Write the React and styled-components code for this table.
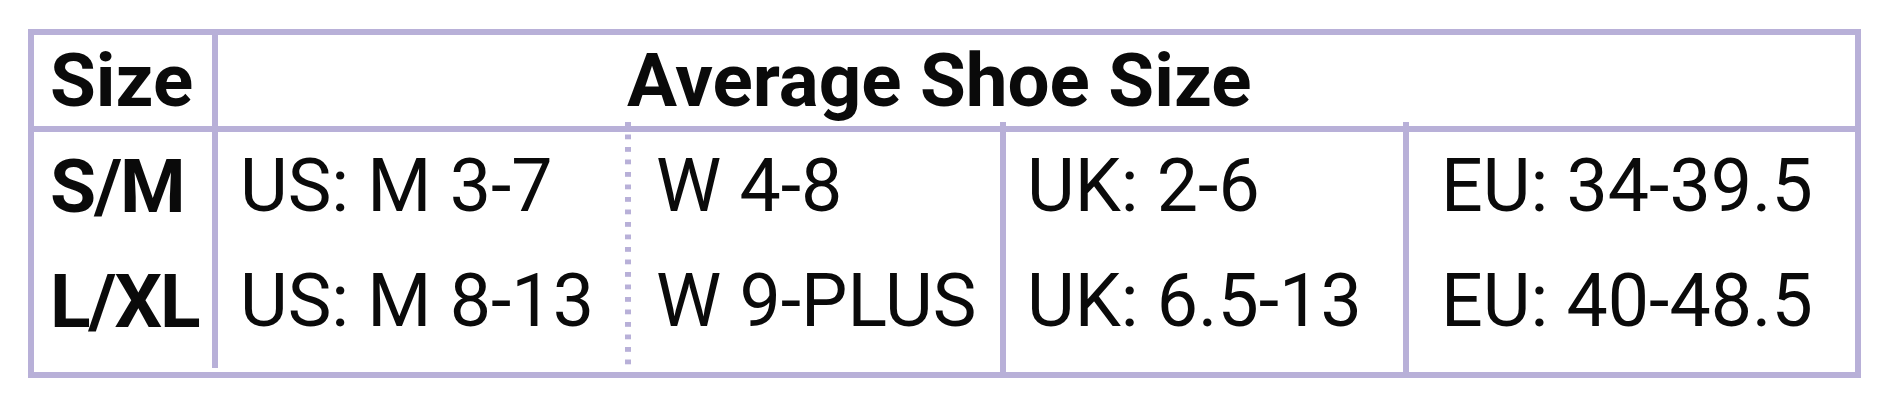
import React from 'react';
import styled, { createGlobalStyle } from 'styled-components';

const lilac = '#b8b0d8';

const GlobalStyle = createGlobalStyle`
    html, body {
        margin: 0;
        padding: 0;
        background: #ffffff;
    }
    body {
        font-family: Roboto, "Liberation Sans", Arial, sans-serif;
        color: #0a0a0a;
    }
`;

const rows = [
    { label: 'S/M', us: 'US: M 3-7', w: 'W 4-8', uk: 'UK: 2-6', eu: 'EU: 34-39.5' },
    { label: 'L/XL', us: 'US: M 8-13', w: 'W 9-PLUS', uk: 'UK: 6.5-13', eu: 'EU: 40-48.5' },
];

function App() {
    return (
        <>
            <GlobalStyle />
            <Page>
                <Table>
                    <HeaderRow>
                        <HeadLabel>Size</HeadLabel>
                        <HeadTitle>Average Shoe Size</HeadTitle>
                    </HeaderRow>
                    <Body>
                        <LabelCol>
                            {rows.map((r) => (
                                <Cell key={r.label} $bold>{r.label}</Cell>
                            ))}
                        </LabelCol>
                        <Column $width="407px" $pad="22px">
                            {rows.map((r) => <Cell key={r.us}>{r.us}</Cell>)}
                        </Column>
                        <Column $width="375px" $pad="25px" $line="dotted">
                            {rows.map((r) => <Cell key={r.w}>{r.w}</Cell>)}
                        </Column>
                        <Column $width="403px" $pad="21px" $line="solid">
                            {rows.map((r) => <Cell key={r.uk}>{r.uk}</Cell>)}
                        </Column>
                        <Column $pad="32px" $line="solid" $grow>
                            {rows.map((r) => <Cell key={r.eu}>{r.eu}</Cell>)}
                        </Column>
                    </Body>
                </Table>
            </Page>
        </>
    );
}

const Page = styled.div`
    padding: 29px 0 0 28px;
`;

const Table = styled.div`
    box-sizing: border-box;
    width: 1833px;
    height: 349px;
    border: 6px solid ${lilac};
    display: flex;
    flex-direction: column;
`;

const HeaderRow = styled.div`
    display: flex;
    height: 97px;
    box-sizing: border-box;
    border-bottom: 6px solid ${lilac};
`;

const HeadLabel = styled.div`
    box-sizing: border-box;
    width: 184px;
    border-right: 6px solid ${lilac};
    padding: 9px 0 0 16px;
    font-size: 74.5px;
    font-weight: 700;
    line-height: 74px;
`;

const HeadTitle = styled.div`
    padding: 9px 0 0 409px;
    font-size: 74.5px;
    font-weight: 700;
    line-height: 74px;
    white-space: nowrap;
`;

const Body = styled.div`
    display: flex;
    flex: 1;
`;

const LabelCol = styled.div`
    box-sizing: border-box;
    width: 184px;
    margin-bottom: 4px;
    border-right: 6px solid ${lilac};
    padding: 18px 0 0 16px;
    display: flex;
    flex-direction: column;
    gap: 43px;
`;

const Column = styled.div`
    box-sizing: border-box;
    width: ${(p) => p.$width || 'auto'};
    flex: ${(p) => (p.$grow ? '1' : 'none')};
    display: flex;
    flex-direction: column;
    gap: 43px;
    padding: 18px 0 0 ${(p) => p.$pad};

    ${(p) => p.$line && `
        margin-top: -10px;
        padding-top: 28px;
    `}

    ${(p) => p.$line === 'solid' && `
        border-left: 6px solid ${lilac};
    `}

    ${(p) => p.$line === 'dotted' && `
        margin-bottom: 4px;
        padding-left: calc(${p.$pad} + 6px);
        background-image: linear-gradient(to bottom, ${lilac} 5px, transparent 5px);
        background-size: 6px 12.5px;
        background-repeat: repeat-y;
        background-position: 0 0;
    `}
`;

const Cell = styled.div`
    height: 72px;
    font-size: ${(p) => (p.$bold ? '75px' : '73.5px')};
    font-weight: ${(p) => (p.$bold ? 700 : 400)};
    letter-spacing: ${(p) => (p.$bold ? '-2px' : '0')};
    line-height: 72px;
    white-space: nowrap;
`;

export default App;
